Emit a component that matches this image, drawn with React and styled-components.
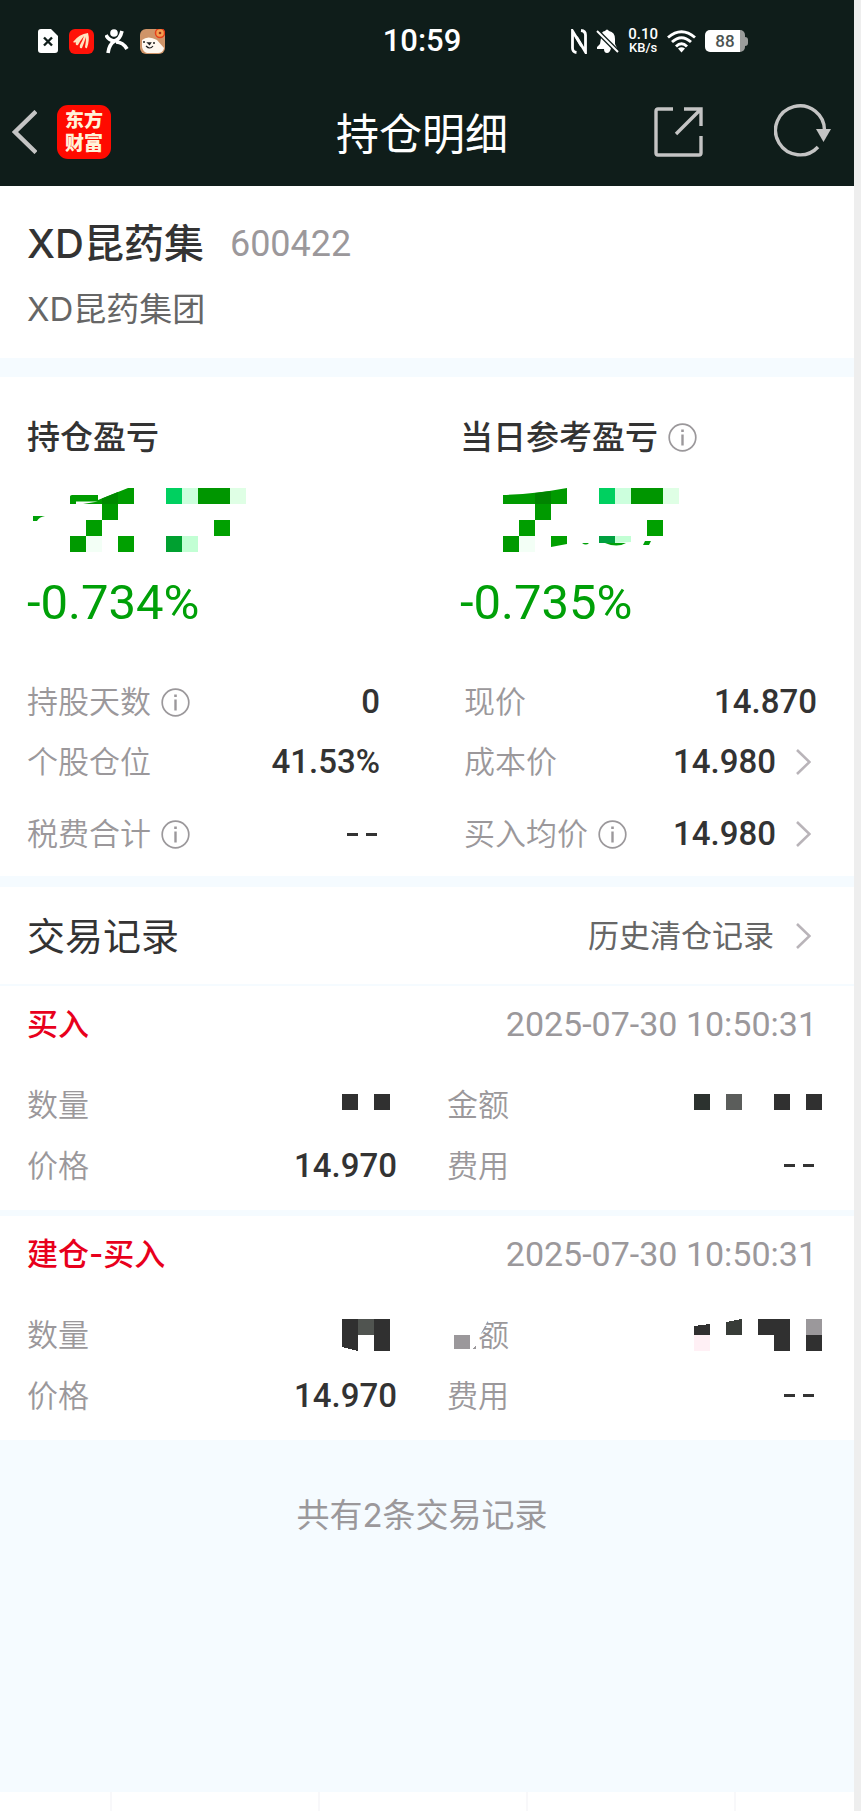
import styled, { createGlobalStyle } from 'styled-components'

const GlobalStyle = createGlobalStyle`
* {
box-sizing: border-box;
}
body {
margin: 0;
background-color: #eeeeee;
}
svg {
display: block;
flex-shrink: 0;
}
`;
const Page = styled.div`
display: flex;
flex-direction: column;
min-height: 100vh;
margin-right: 7px;
background-color: #f5fbff;
color: #333333;
font-family: Inter, 'Noto Sans CJK SC', sans-serif;
font-size: 31px;
line-height: 40px;
`;
const Header = styled.header`
background-color: #0f1d1a;
color: #ffffff;
`;
const StatusBar = styled.div`
display: grid;
grid-template-columns: 1fr auto 1fr;
align-items: center;
height: 82px;
padding: 0 48px 0 38px;
`;
const StatusIcons = styled.div`
display: flex;
align-items: center;
gap: 11px;
`;
const StatusRight = styled(StatusIcons)`
justify-self: end;
gap: 9px;
padding-right: 58px;
`;
const Clock = styled.time`
font-family: Roboto, sans-serif;
font-size: 31px;
font-weight: 500;
`;
const Speed = styled.div`
display: flex;
flex-direction: column;
font-family: Roboto, sans-serif;
font-size: 15px;
font-weight: 500;
line-height: 13px;
text-align: center;
`;
const SpeedUnit = styled.span`
font-size: 13px;
`;
const Battery = styled.div`
display: flex;
align-items: center;
`;
const BatteryBody = styled.div`
width: 40px;
height: 22px;
border-radius: 5px;
background: linear-gradient(90deg, #ffffff 88%, #9a9c9b 88%);
color: #4c5452;
font-family: Roboto, sans-serif;
font-size: 17px;
font-weight: 500;
line-height: 23px;
text-align: center;
`;
const BatteryTip = styled.div`
width: 3px;
height: 9px;
border-radius: 0 3px 3px 0;
background-color: #9a9c9b;
`;
const NavBar = styled.nav`
display: grid;
grid-template-columns: 1fr auto 1fr;
align-items: center;
height: 104px;
padding: 0 22px 4px 12px;
`;
const NavSide = styled.div`
display: flex;
align-items: center;
gap: ${props => props.$gap};
justify-self: ${props => props.$side};
`;
const IconButton = styled.button`
display: flex;
flex-shrink: 0;
padding: 0;
border: 0;
background: none;
color: ${props => props.$color || '#c4c4c4'};
cursor: pointer;
`;
const Brand = styled.div`
display: flex;
align-items: center;
justify-content: center;
width: 54px;
height: 54px;
border-radius: 11px;
background-color: #ff0a00;
color: #fff3d8;
font-size: 19px;
font-weight: 900;
line-height: 23px;
text-align: center;
`;
const Title = styled.h1`
margin: 0;
padding-top: 4px;
font-size: 43px;
font-weight: 400;
line-height: 56px;
`;
const StockPanel = styled.section`
padding: 36px 37px 29px 27px;
border-bottom: 19px solid #f5fbff;
background-color: #ffffff;
`;
const StockLine = styled.div`
display: flex;
align-items: center;
gap: 26px;
height: 44px;
`;
const StockName = styled.h2`
margin: 0;
font-size: 40px;
font-weight: 500;
`;
const StockCode = styled.span`
color: #9b989b;
font-family: Roboto, sans-serif;
font-size: 36px;
`;
const FullName = styled.p`
margin: 23px 0 0;
color: #666666;
font-size: 33px;
`;
const ProfitPanel = styled.section`
padding: 40px 37px 12px 27px;
background-color: #ffffff;
`;
const Columns = styled.div`
display: grid;
grid-template-columns: 1fr 1fr;
column-gap: ${props => props.$gap};
margin: 0;
`;
const ProfitTitle = styled.h3`
display: flex;
align-items: center;
gap: 10px;
margin: 0 0 31px;
font-size: 33px;
font-weight: 500;
line-height: 40px;
`;
const Percent = styled.p`
margin: 23px 0 41px;
color: #00a008;
font-family: Roboto, sans-serif;
font-size: 49px;
line-height: 56px;
`;
const List = styled.dl`
margin: 0;
`;
const Row = styled.div`
display: flex;
align-items: center;
justify-content: space-between;
height: ${props => props.$height || '60px'};
margin-top: ${props => props.$apart ? '12px' : 0};
`;
const Label = styled.dt`
display: flex;
align-items: center;
gap: 10px;
color: #9b989b;
font-weight: 350;
`;
const Value = styled.dd`
display: flex;
align-items: center;
gap: 20px;
margin: 0;
padding-right: ${props => props.$inset ? '6px' : 0};
font-family: Roboto, sans-serif;
font-size: 33px;
font-weight: 500;
`;
const Dashes = styled.span`
display: flex;
gap: 8px;
padding-right: 3px;
&::before, &::after {
content: '';
width: 11px;
height: 3px;
background-color: currentColor;
}
`;
const RecordsPanel = styled.section`
border-top: 11px solid #f5fbff;
background-color: #ffffff;
`;
const RecordsHead = styled.div`
display: flex;
align-items: center;
justify-content: space-between;
height: 99px;
padding: 0 43px 0 27px;
border-bottom: 2px solid #f5fbff;
`;
const RecordsTitle = styled.h2`
margin: 0;
font-size: 38px;
font-weight: 400;
`;
const HistoryLink = styled.a`
display: flex;
align-items: center;
gap: 22px;
color: #666666;
text-decoration: none;
`;
const Record = styled.article`
padding: 0 37px 14px 27px;
& + & {
border-top: 6px solid #f5fbff;
}
`;
const RecordHead = styled.div`
display: flex;
align-items: center;
justify-content: space-between;
height: 75px;
margin-bottom: 13px;
`;
const RecordKind = styled.h3`
margin: 0;
color: #e8001c;
font-size: 31px;
font-weight: 500;
`;
const RecordTime = styled.time`
color: #9b989b;
font-family: Roboto, sans-serif;
font-size: 34px;
`;
const Covered = styled.span`
display: flex;
align-items: center;
`;
const CutChar = styled.span`
clip-path: polygon(42% 0, 100% 0, 100% 100%, 0 100%, 0 62%);
`;
// the masks reach a little past the right edge of the text column
const Overhang = styled.span`
display: flex;
margin-right: -5px;
`;
const Total = styled.p`
margin: 55px 0 0;
padding-right: 10px;
color: #9b989b;
font-size: 33px;
text-align: center;
`;
const BottomBar = styled.div`
display: grid;
grid-template-columns: 112fr 208fr 208fr 208fr 118fr;
height: 19px;
margin-top: auto;
background-color: #ffffff;
`;
const BottomCell = styled.div`
border-right: 2px solid #f8f8fa;
&:last-child {
border-right: 0;
}
`;

const InfoButton = ({ label }) => (
  <IconButton $color="#9b989b" aria-label={label}>
    <svg width="29" height="29" viewBox="0 0 29 29" fill="none" stroke="currentColor" strokeWidth="1.7">
      <circle cx="14.5" cy="14.5" r="13.3" />
      <path d="M14.5 11.5V22.5" strokeWidth="2.4" />
      <path d="M14.5 6.5V9" strokeWidth="2.6" />
    </svg>
  </IconButton>
)

const Chevron = () => (
  <svg width="15" height="26" viewBox="0 0 15 26" fill="none" stroke="#b9b4b9" strokeWidth="2.6">
    <path d="M1 1L13.5 13L1 25" />
  </svg>
)

// every cell is [x, y, width, height, color]
const Mosaic = ({ width, height, cells, children }) => (
  <svg width={width} height={height} viewBox={`0 0 ${width} ${height}`} shapeRendering="crispEdges">
    {cells.map(([x, y, w, h, fill]) => <rect key={`${x}-${y}`} x={x} y={y} width={w} height={h} fill={fill} />)}
    {children}
  </svg>
)

const profitCells = [
  [75, 16, 16, 16, '#009a00'],
  [59, 32, 16, 16, '#009e00'],
  [43, 48, 16, 16, '#009a00'],
  [59, 48, 16, 16, '#f3fff6'],
  [139, 0, 16, 16, '#00d060'],
  [155, 0, 16, 16, '#ccffdd'],
  [171, 0, 32, 16, '#009600'],
  [203, 0, 16, 16, '#dfffe5'],
  [187, 32, 16, 16, '#00a000'],
]

const HoldProfit = () => (
  <Mosaic
    width={219}
    height={64}
    cells={[...profitCells, [91, 48, 16, 16, '#00a000'], [139, 48, 16, 16, '#00a030'], [155, 48, 16, 16, '#c2ffd4']]}
  >
    <g shapeRendering="auto">
      <path d="M43 16V8.5Q43 7 45 7H71V12L101 0H107V16H56L71 13.5H49V16Z" fill="#009c00" />
      <path d="M75 10.5L91 4V16H75Z" fill="#008a00" />
      <path d="M6 28H18Q12 29 10 33H6Z" fill="#00a008" />
    </g>
  </Mosaic>
)

const DayProfit = () => (
  <Mosaic width={219} height={64} cells={profitCells}>
    <g shapeRendering="auto">
      <path d="M43 7Q75 6 107 0V16H43Z" fill="#009a00" />
      <path d="M75 5L91 3V16H75Z" fill="#008400" />
      <path d="M91 48H107V56L91 59Z" fill="#00a000" />
      <path d="M139 48H155V55H139Z" fill="#00a040" />
      <path d="M155 48H171V54L155 55Z" fill="#c2ffd4" />
      <path d="M145 55H166Q157 60 145 55ZM122 55H129Q126 58 122 55ZM185 53H191L189 57H183Z" fill="#00a008" />
    </g>
  </Mosaic>
)

const records = [
  {
    kind: '买入',
    time: '2025-07-30 10:50:31',
    amountLabel: '金额',
    count: <Mosaic width={55} height={32} cells={[[0, 5, 16, 16, '#303030'], [32, 5, 16, 16, '#303030']]} />,
    amount: (
      <Mosaic
        width={128}
        height={32}
        cells={[[0, 5, 16, 16, '#2c322f'], [32, 5, 16, 16, '#5b5d5b'], [80, 5, 16, 16, '#303030'], [112, 5, 16, 16, '#303030']]}
      />
    ),
    price: '14.970',
  },
  {
    kind: '建仓-买入',
    time: '2025-07-30 10:50:31',
    amountLabel: (
      <Covered>
        <Mosaic width={31} height={32} cells={[[7, 16, 16, 14, '#9b989b']]}>
          <path d="M25 30L29 27V30Z" fill="#9b989b" />
        </Mosaic>
        <CutChar>额</CutChar>
      </Covered>
    ),
    count: (
      <Mosaic width={55} height={32} cells={[[16, 0, 16, 16, '#505450'], [32, 0, 16, 32, '#303030']]}>
        <path d="M0 0H16V32L0 28Z" fill="#303030" />
      </Mosaic>
    ),
    amount: (
      <Mosaic
        width={128}
        height={32}
        cells={[[0, 16, 16, 16, '#fff0f5'], [64, 0, 32, 16, '#303030'], [80, 16, 16, 16, '#303030'], [112, 0, 16, 16, '#9b989b'], [112, 16, 16, 16, '#303030']]}
      >
        <path d="M0 7L16 5V16H0Z" fill="#303030" />
        <path d="M32 3L48 0V16H32Z" fill="#383c38" />
      </Mosaic>
    ),
    price: '14.970',
  },
]

function RecordItem({ record }) {
  return (
    <Record>
      <RecordHead>
        <RecordKind>{record.kind}</RecordKind>
        <RecordTime>{record.time}</RecordTime>
      </RecordHead>
      <Columns as="dl" $gap="50px">
        <Row $height="61px">
          <Label>数量</Label>
          <Value>{record.count}</Value>
        </Row>
        <Row $height="61px">
          <Label>{record.amountLabel}</Label>
          <Value><Overhang>{record.amount}</Overhang></Value>
        </Row>
        <Row $height="61px">
          <Label>价格</Label>
          <Value>{record.price}</Value>
        </Row>
        <Row $height="61px">
          <Label>费用</Label>
          <Value><Dashes aria-label="--" /></Value>
        </Row>
      </Columns>
    </Record>
  )
}

function App() {
  return (
    <Page>
      <GlobalStyle />
      <Header>
        <StatusBar>
          <StatusIcons>
            <svg width="20" height="24" viewBox="0 0 20 24">
              <path d="M3 0H13L20 7V21Q20 24 17 24H3Q0 24 0 21V3Q0 0 3 0Z" fill="#fff" />
              <path d="M6 8.5L14 16.5M14 8.5L6 16.5" stroke="#0f1d1a" strokeWidth="2.4" />
            </svg>
            <svg width="25" height="25" viewBox="0 0 25 25">
              <rect width="25" height="25" rx="6" fill="#ff1208" />
              <path d="M4 13Q10 5 19 4Q21 11 18 19Q17 20 16 18Q17 13 17 8Q15 14 13 19Q10 20 11 16Q14 11 15 7Q11 12 9 16Q6 17 7 13Q6 14 4 13Z" fill="#ffe3c0" />
            </svg>
            <svg width="24" height="25" viewBox="0 0 24 25" fill="none" stroke="#fff" strokeWidth="3.6">
              <circle cx="9" cy="4" r="3.8" fill="#fff" stroke="none" />
              <path d="M1 6Q3 11 9 12Q15 11 17 2M3 24Q4 15 10 12M11 13Q18 13 22 20" />
            </svg>
            <svg width="25" height="25" viewBox="0 0 25 25">
              <rect width="25" height="25" rx="6" fill="#cf9468" />
              <path d="M2 11Q8 6 17 11L24 19Q23 24 18 24H7Q3 23 2 18Z" fill="#fff8ef" />
              <circle cx="20" cy="4" r="4.5" fill="#f5a050" stroke="#e5401c" strokeWidth="1.5" />
              <circle cx="20" cy="4" r="1.3" fill="#a3301a" />
              <path d="M3 13H5M13 14H15M8 14H10.5L9.5 15.5Z" stroke="#222" strokeWidth="1.4" />
              <path d="M6 17Q10 21 13 17" fill="none" stroke="#222" strokeWidth="1.2" />
            </svg>
          </StatusIcons>
          <Clock>10:59</Clock>
          <StatusRight>
            <svg width="16" height="25" viewBox="0 0 16 25" fill="none" stroke="#fff" strokeWidth="2.8">
              <path d="M5.5 23.5Q1.5 23 1.5 19V2L10.5 17" />
              <path d="M10 1.500Q14.500 2 14.500 6V23L5.500 8" />
            </svg>
            <svg width="23" height="25" viewBox="0 0 23 25">
              <path d="M5 9Q5 2 9 2Q11 -1 13 2Q19 3 19 10V15L21 19H15Q14 24 11 24Q8 24 8 20H1V18L4 15Z" fill="#fff" />
              <path d="M1 2L22 23" stroke="#0f1d1a" strokeWidth="4.6" />
              <path d="M1 2L22 23" stroke="#fff" strokeWidth="2" />
            </svg>
            <Speed>
              0.10
              <SpeedUnit>KB/s</SpeedUnit>
            </Speed>
            <svg width="29" height="23" viewBox="0 0 29 23" fill="none" stroke="#fff" strokeWidth="2.9">
              <path d="M1 7.5Q14.5 -4 28 7.5M5 12Q14.5 3.5 24 12M9 16.500Q14.5 11 20 16.500" />
              <path d="M11 18.5Q14.5 16 18 18.5L14.5 22.5Z" fill="#fff" stroke="none" />
            </svg>
            <Battery>
              <BatteryBody>88</BatteryBody>
              <BatteryTip />
            </Battery>
          </StatusRight>
        </StatusBar>
        <NavBar>
          <NavSide $gap="20px" $side="start">
            <IconButton aria-label="返回">
              <svg width="25" height="44" viewBox="0 0 25 44" fill="none" stroke="currentColor" strokeWidth="4.4">
                <path d="M24 1.5L3 22L24 42.5" />
              </svg>
            </IconButton>
            <Brand>东方<br />财富</Brand>
          </NavSide>
          <Title>持仓明细</Title>
          <NavSide $gap="71px" $side="end">
            <IconButton aria-label="分享">
              <svg width="49" height="50" viewBox="0 0 49 50" fill="none" stroke="currentColor" strokeWidth="3.4">
                <path d="M19 2H4Q2 2 2 4V46Q2 48 4 48H45Q47 48 47 46V29" />
                <path d="M30 2H47V19M46.5 2.5L22 27" />
              </svg>
            </IconButton>
            <IconButton aria-label="刷新">
              <svg width="58" height="56" viewBox="0 0 58 56" fill="none" stroke="currentColor" strokeWidth="3.4">
                <path d="M50.5 27A24.5 24.5 0 1 0 44 43" />
                <path d="M42 25H57L49.5 38Z" fill="currentColor" stroke="none" />
              </svg>
            </IconButton>
          </NavSide>
        </NavBar>
      </Header>

      <StockPanel>
        <StockLine>
          <StockName>XD昆药集</StockName>
          <StockCode>600422</StockCode>
        </StockLine>
        <FullName>XD昆药集团</FullName>
      </StockPanel>

      <ProfitPanel>
        <Columns $gap="76px">
          <div>
            <ProfitTitle>持仓盈亏</ProfitTitle>
            <HoldProfit />
            <Percent>-0.734%</Percent>
          </div>
          <div>
            <ProfitTitle>当日参考盈亏<InfoButton label="当日参考盈亏说明" /></ProfitTitle>
            <DayProfit />
            <Percent>-0.735%</Percent>
          </div>
        </Columns>
        <Columns $gap="84px">
          <List>
            <Row>
              <Label>持股天数<InfoButton label="持股天数说明" /></Label>
              <Value>0</Value>
            </Row>
            <Row>
              <Label>个股仓位</Label>
              <Value>41.53%</Value>
            </Row>
            <Row $apart>
              <Label>税费合计<InfoButton label="税费合计说明" /></Label>
              <Value><Dashes aria-label="--" /></Value>
            </Row>
          </List>
          <List>
            <Row>
              <Label>现价</Label>
              <Value>14.870</Value>
            </Row>
            <Row>
              <Label>成本价</Label>
              <Value $inset>14.980<IconButton aria-label="成本价详情"><Chevron /></IconButton></Value>
            </Row>
            <Row $apart>
              <Label>买入均价<InfoButton label="买入均价说明" /></Label>
              <Value $inset>14.980<IconButton aria-label="买入均价详情"><Chevron /></IconButton></Value>
            </Row>
          </List>
        </Columns>
      </ProfitPanel>

      <RecordsPanel>
        <RecordsHead>
          <RecordsTitle>交易记录</RecordsTitle>
          <HistoryLink href="#history">历史清仓记录<Chevron /></HistoryLink>
        </RecordsHead>
        {records.map(record => {
          return <RecordItem record={record} key={record.kind} />
        })}
      </RecordsPanel>

      <Total>共有2条交易记录</Total>

      <BottomBar>
        <BottomCell />
        <BottomCell />
        <BottomCell />
        <BottomCell />
        <BottomCell />
      </BottomBar>
    </Page>
  )
}

export default App
